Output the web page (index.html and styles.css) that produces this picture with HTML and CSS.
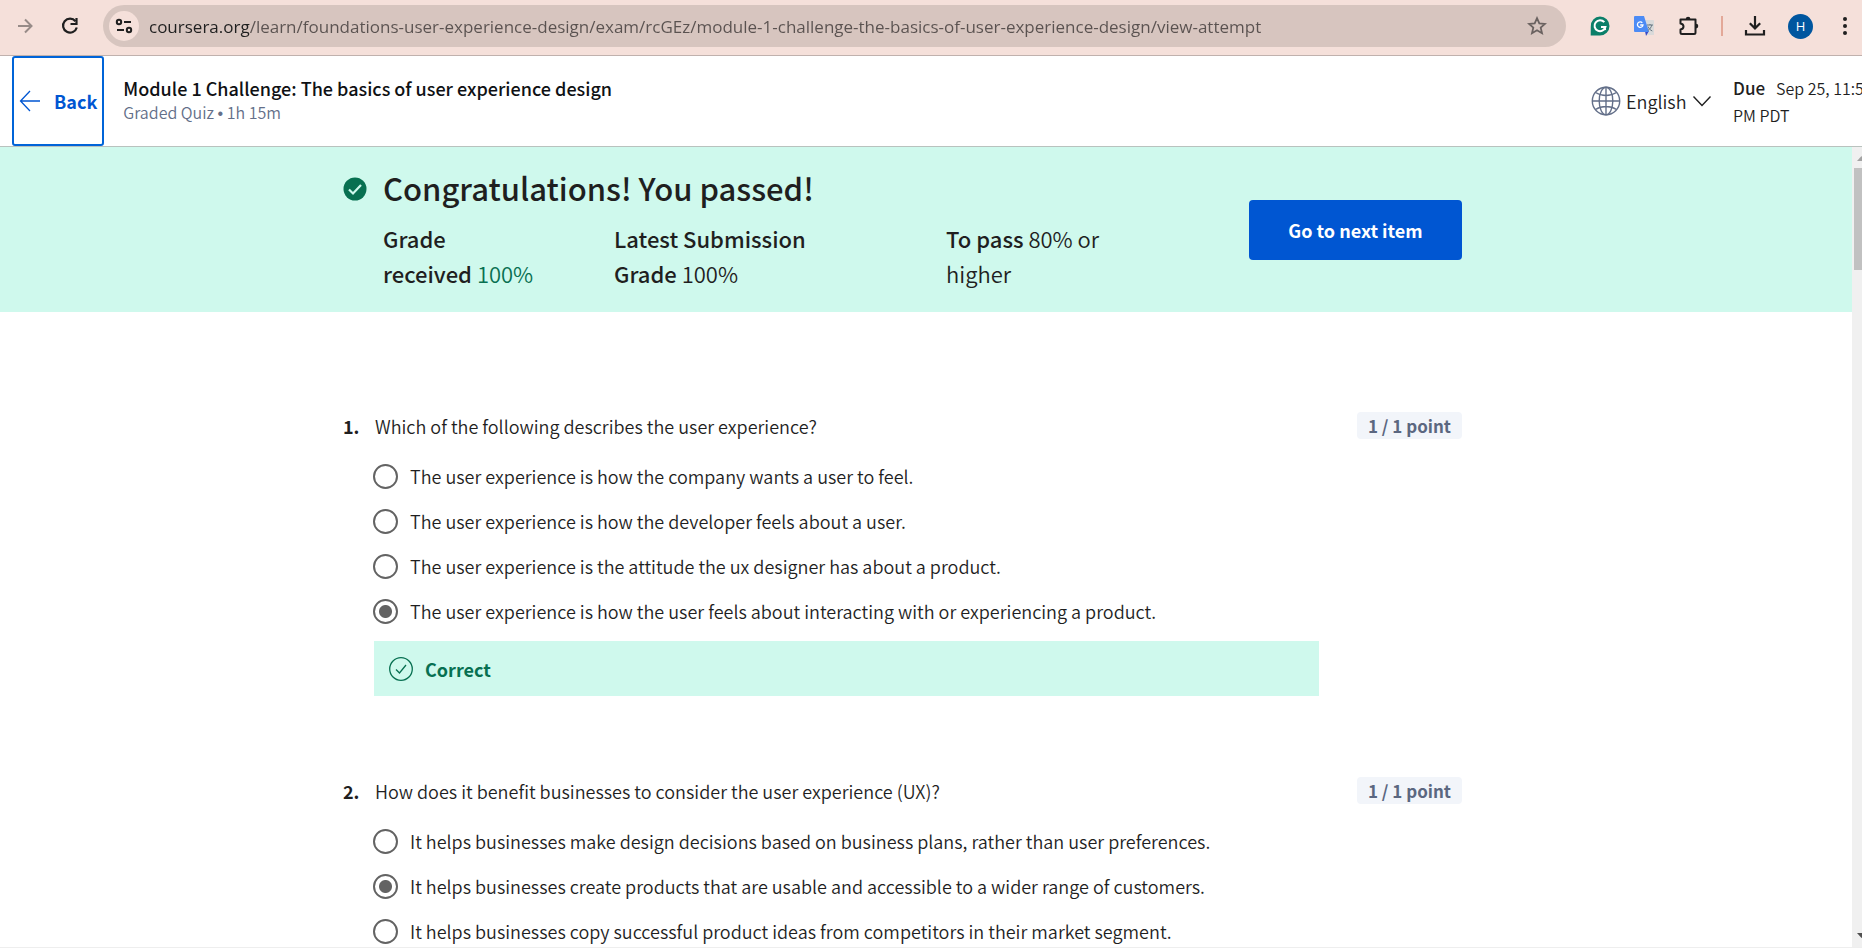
FILE: index.html
```html
<!DOCTYPE html>
<html lang="en">
<head>
<meta charset="utf-8">
<title>Module 1 Challenge: The basics of user experience design</title>
<link rel="stylesheet" href="styles.css">
</head>
<body>
<div class="toolbar">
  <button class="tool forward" aria-label="Forward"><svg width="20" height="20" viewBox="0 0 20 20" fill="none" stroke="#978b88" stroke-width="2"><path d="M3 10h13M10 3.500l6.500 6.500-6.500 6.500"/></svg></button>
  <button class="tool reload" aria-label="Reload"><svg width="20" height="20" viewBox="0 0 20 20" fill="none" stroke="#1f1f1f" stroke-width="2.200"><path d="M15.500 5.200A7 7 0 1 0 16.800 11.500"/><path d="M16.500 2v6h-6"/></svg></button>
  <div class="address">
    <button class="site-info" aria-label="Site information"><svg width="18" height="18" viewBox="0 0 18 18" fill="none" stroke="#1f1f1f" stroke-width="2"><circle cx="4" cy="5" r="2.200"/><path d="M9 5h7M2 13h7"/><circle cx="14" cy="13" r="2.200"/></svg></button>
    <input class="url" type="text" aria-label="Address" value="coursera.org/learn/foundations-user-experience-design/exam/rcGEz/module-1-challenge-the-basics-of-user-experience-design/view-attempt">
    <button class="tool" aria-label="Bookmark"><svg width="20" height="20" viewBox="0 0 20 20" fill="none" stroke="#6a6260" stroke-width="1.800"><path d="M10 2.200l2.300 5.200 5.700.5-4.300 3.700 1.300 5.600-5-3-5 3 1.300-5.600L2 7.900l5.700-.5z"/></svg></button>
  </div>
  <div class="extensions">
    <button class="tool" aria-label="Grammarly"><svg width="20" height="20" viewBox="0 0 20 20"><path d="M10 .5a9.500 9.500 0 1 1 0 19H.7l.1-9A9.500 9.500 0 0 1 10 .5z" fill="#0b7f69"/><path d="M14.300 6.200A5.500 5.500 0 1 0 15.400 11H11" fill="none" stroke="#fff" stroke-width="2"/><path d="M13 13.300l2.500-2.300.7 3.300" fill="#fff"/></svg></button>
    <button class="tool" aria-label="Translate"><svg width="20" height="20" viewBox="0 0 20 20"><path d="M8 4h11a1 1 0 0 1 1 1v14H12z" fill="#dadada"/><path d="M11 15h4l-3 5z" fill="#3949c6"/><path d="M1 0h9l5 16H1a1 1 0 0 1-1-1V1a1 1 0 0 1 1-1z" fill="#4c8bf5"/><path d="M8.300 6.700A2.800 2.800 0 1 0 9 9H6.200" fill="none" stroke="#fff" stroke-width="1.300"/><path d="M13 9h6M16 8v1M17.800 9c-.6 2.500-2 4.300-4 5.600M14 10.500c.8 2 2.200 3.500 4.300 4.500" fill="none" stroke="#647681" stroke-width="1"/></svg></button>
    <button class="tool" aria-label="Extensions"><svg width="22" height="22" viewBox="0 0 22 22"><path d="M2.500 4.500h15v13a1.500 1.500 0 0 1-1.500 1.500H4a1.500 1.500 0 0 1-1.500-1.500v-3c4-.5 4-5.500 0-6z" fill="none" stroke="#1f1f1f" stroke-width="2" stroke-linejoin="round"/><path d="M7.800 4a2.300 2.300 0 0 1 4.600 0zM18 8.800a2.300 2.300 0 0 1 0 4.600z" fill="#1f1f1f"/></svg></button>
    <span class="divider"></span>
    <button class="tool" aria-label="Downloads"><svg width="22" height="22" viewBox="0 0 22 22" fill="none" stroke="#1f1f1f" stroke-width="2.200"><path d="M11 1v12M5.800 8.200l5.200 5.200 5.200-5.200M2 15v4.500h18V15"/></svg></button>
    <button class="avatar" aria-label="Profile">H</button>
    <button class="tool" aria-label="Menu"><svg width="20" height="20" viewBox="0 0 20 20" fill="#1f1f1f"><circle cx="10" cy="3" r="2"/><circle cx="10" cy="10" r="2"/><circle cx="10" cy="17" r="2"/></svg></button>
  </div>
</div>

<header class="header">
  <button class="back"><svg width="22" height="24" viewBox="0 0 22 24" fill="none" stroke="#0056d2" stroke-width="1.300"><path d="M21 12H1.500M11 2L1.500 12 11 22"/></svg>Back</button>
  <div class="heading">
    <h1 class="heading-title">Module 1 Challenge: The basics of user experience design</h1>
    <p class="heading-sub">Graded Quiz <span class="bullet">•</span> 1h 15m</p>
  </div>
  <label class="language">
    <svg width="30" height="30" viewBox="0 0 30 30" fill="none" stroke="#636f89" stroke-width="1.400"><circle cx="15" cy="15" r="13.700"/><ellipse cx="15" cy="15" rx="6.800" ry="13.700"/><path d="M1.300 15h27.400M15 1.300v27.400M4.500 6.500c6 4 15 4 21 0M4.500 23.500c6-4 15-4 21 0"/></svg>
    <select class="language-select" aria-label="Language"><option>English</option></select>
    <svg width="20" height="12" viewBox="0 0 20 12" fill="none" stroke="#1f1f1f" stroke-width="1.400"><path d="M1.500 1.500L10 10.500l8.500-9"/></svg>
  </label>
  <p class="due"><b>Due</b>Sep 25, 11:59 PM PDT</p>
</header>

<div class="viewport">
  <main class="content">
    <section class="banner">
      <div class="column banner-row">
        <svg class="passed" width="24" height="24" viewBox="0 0 24 24"><circle cx="12" cy="12" r="11.500" fill="#087051"/><path d="M6 12.500l4 4 8-8.500" fill="none" stroke="#cff9ed" stroke-width="2.200"/></svg>
        <div class="result">
          <h2 class="result-title">Congratulations! You passed!</h2>
          <div class="grades">
            <p><b>Grade received</b>&nbsp;<span class="green">100%</span></p>
            <p><b>Latest Submission Grade</b>&nbsp;100%</p>
            <p><b>To pass</b> 80% or higher</p>
          </div>
        </div>
        <button class="next">Go to next item</button>
      </div>
    </section>

    <div class="column questions">
      <fieldset class="question">
        <legend class="prompt"><span class="number">1.</span><span class="prompt-text">Which of the following describes the user experience?</span><span class="points">1 / 1 point</span></legend>
        <div class="answers">
          <label class="answer"><input class="radio" type="radio" name="q1">The user experience is how the company wants a user to feel.</label>
          <label class="answer"><input class="radio" type="radio" name="q1">The user experience is how the developer feels about a user.</label>
          <label class="answer"><input class="radio" type="radio" name="q1">The user experience is the attitude the ux designer has about a product.</label>
          <label class="answer"><input class="radio" type="radio" name="q1" checked>The user experience is how the user feels about interacting with or experiencing a product.</label>
        </div>
        <div class="feedback"><svg width="24" height="24" viewBox="0 0 24 24" fill="none" stroke="#087051" stroke-width="1.300"><circle cx="12" cy="12" r="11.300"/><path d="M7 12.500l3.500 3.500 6.500-8"/></svg>Correct</div>
      </fieldset>
      <fieldset class="question">
        <legend class="prompt"><span class="number">2.</span><span class="prompt-text">How does it benefit businesses to consider the user experience (UX)?</span><span class="points">1 / 1 point</span></legend>
        <div class="answers">
          <label class="answer"><input class="radio" type="radio" name="q2">It helps businesses make design decisions based on business plans, rather than user preferences.</label>
          <label class="answer"><input class="radio" type="radio" name="q2" checked>It helps businesses create products that are usable and accessible to a wider range of customers.</label>
          <label class="answer"><input class="radio" type="radio" name="q2">It helps businesses copy successful product ideas from competitors in their market segment.</label>
        </div>
      </fieldset>
    </div>
  </main>
  <div class="scrollbar">
    <svg width="17" height="21" viewBox="0 0 17 21"><path d="M5 14l4.500-5 4.500 5z" fill="#a3a3a3"/></svg>
    <span class="thumb"></span>
    <svg width="17" height="21" viewBox="0 0 17 21"><path d="M5 7l4.500 5 4.500-5z" fill="#505050"/></svg>
  </div>
</div>
</body>
</html>
```

FILE: styles.css
```css
* {
  box-sizing: border-box;
}

body {
  margin: 0;
  height: 100vh;
  overflow: hidden;
  display: flex;
  flex-direction: column;
  background: #fff;
  color: #1f1f1f;
  font-family: "Noto Sans CJK SC", "Noto Sans", sans-serif;
  font-size: 18px;
  font-weight: 350;
  line-height: 24px;
}

h1, h2, p, fieldset {
  margin: 0;
}

button, select, input {
  margin: 0;
  padding: 0;
  border: 0;
  background: none;
  color: inherit;
  font: inherit;
}

svg {
  display: block;
  flex: none;
}

b {
  font-weight: 500;
}

/* Browser toolbar */
.toolbar {
  flex: none;
  display: flex;
  align-items: center;
  padding: 5px 7px 8px 15px;
  background: #f5e0da;
  border-bottom: 1px solid #c0b1ad;
}

.tool {
  display: flex;
  align-items: center;
  justify-content: center;
  flex: none;
}

.reload {
  margin: 0 23px 0 25px;
}

.address {
  flex: 1;
  min-width: 0;
  height: 42px;
  display: flex;
  align-items: center;
  padding: 0 19px 0 6px;
  border-radius: 21px;
  background: #d7c5bf;
}

.site-info {
  width: 30px;
  height: 30px;
  flex: none;
  display: flex;
  align-items: center;
  justify-content: center;
  border-radius: 50%;
  background: #f5e0da;
}

.url {
  flex: 1;
  min-width: 0;
  height: 30px;
  margin: 0 10px;
  font-family: "Open Sans", "Noto Sans", sans-serif;
  font-size: 17px;
  font-weight: 400;
  background: linear-gradient(to right, #1f1f1f 101px, #5a5250 101px);
  -webkit-background-clip: text;
  background-clip: text;
  color: transparent;
}

.extensions {
  flex: none;
  display: flex;
  align-items: center;
  gap: 24px;
  padding-left: 24px;
}

.divider {
  width: 2px;
  height: 20px;
  margin: 0 -3px;
  background: #e3a898;
}

.avatar {
  width: 25px;
  height: 25px;
  margin: 0 -2px;
  border-radius: 50%;
  background: #00569f;
  color: #fff;
  font-family: "Open Sans", sans-serif;
  font-size: 13px;
  font-weight: 400;
}

/* Quiz header */
.header {
  flex: none;
  display: flex;
  align-items: center;
  width: calc(100% + 16px);
  padding-left: 12px;
  border-bottom: 1px solid #b9c2be;
}

.back {
  flex: none;
  display: flex;
  align-items: center;
  gap: 13px;
  height: 90px;
  padding: 0 5px;
  border: 2px solid #0064d8;
  border-radius: 3px;
  color: #0056d2;
  font-weight: 700;
}

.heading {
  flex: 1;
  margin-left: 19px;
}

.heading-title {
  font-size: 18px;
  font-weight: 500;
  line-height: 24px;
  color: #0f1114;
}

.heading-sub {
  font-size: 16px;
  color: #636f89;
}

.bullet {
  font-family: "Liberation Sans", sans-serif;
}

.language {
  display: flex;
  align-items: center;
  gap: 5px;
}

.language-select {
  appearance: none;
  height: 32px;
  line-height: 32px;
}

.due {
  width: 145px;
  margin-left: 21px;
  font-size: 16px;
  line-height: 27px;
}

.due b {
  margin-right: 11px;
  font-size: 17px;
}

/* Scrolling area */
.viewport {
  flex: 1;
  min-height: 0;
  display: flex;
  overflow: hidden;
  border-bottom: 1px solid #eee;
}

.content {
  flex: 1;
  overflow: hidden;
}

.scrollbar {
  width: 10px;
  overflow: hidden;
  display: flex;
  flex-direction: column;
  background: #f0f0f0;
}

.thumb {
  height: 102px;
  margin: 0 0 auto 2px;
  background: #c1c1c1;
}

.column {
  max-width: 1166px;
  margin: 0 auto;
  padding-right: 47px;
}

.banner {
  padding: 18px 0 21px;
  background: #cff9ed;
}

.banner-row {
  display: flex;
  align-items: flex-start;
}

.passed {
  margin: 12px 16px 0 0;
}

.result {
  flex: 1;
}

.result-title {
  font-size: 31px;
  font-weight: 500;
  line-height: 46px;
  margin-bottom: 10px;
}

.grades {
  display: grid;
  grid-template-columns: 171fr 272fr 183fr;
  gap: 60px;
  font-size: 22px;
  line-height: 35px;
}

.green {
  color: #087051;
}

.next {
  width: 213px;
  height: 60px;
  margin: 35px 0 0 120px;
  border-radius: 4px;
  background: #0056d2;
  color: #fff;
  font-weight: 700;
}

/* Questions */
.questions {
  padding-top: 100px;
}

.question {
  min-width: 0;
  padding: 0;
  border: 0;
  margin-bottom: 81px;
}

.prompt {
  width: 100%;
  padding: 0;
  display: flex;
  align-items: center;
}

.number {
  width: 32px;
  font-weight: 700;
}

.prompt-text {
  flex: 1;
}

.points {
  padding: 0 11px;
  border-radius: 4px;
  background: #f2f5fa;
  color: #5b6780;
  font-size: 17px;
  font-weight: 700;
  line-height: 27px;
}

.answers {
  display: flex;
  flex-direction: column;
  gap: 20px;
  padding: 25px 0 17px 30px;
}

.answer {
  display: flex;
  align-items: center;
  gap: 12px;
  line-height: 25px;
}

.radio {
  appearance: none;
  flex: none;
  width: 25px;
  height: 25px;
  border: 2px solid #636363;
  border-radius: 50%;
}

.radio:checked {
  background: radial-gradient(circle, #636363 6px, transparent 7px);
}

.feedback {
  display: flex;
  align-items: center;
  gap: 12px;
  height: 55px;
  margin: 0 143px 0 31px;
  padding-left: 15px;
  background: #cff9ed;
  color: #087051;
  font-weight: 700;
}
```
